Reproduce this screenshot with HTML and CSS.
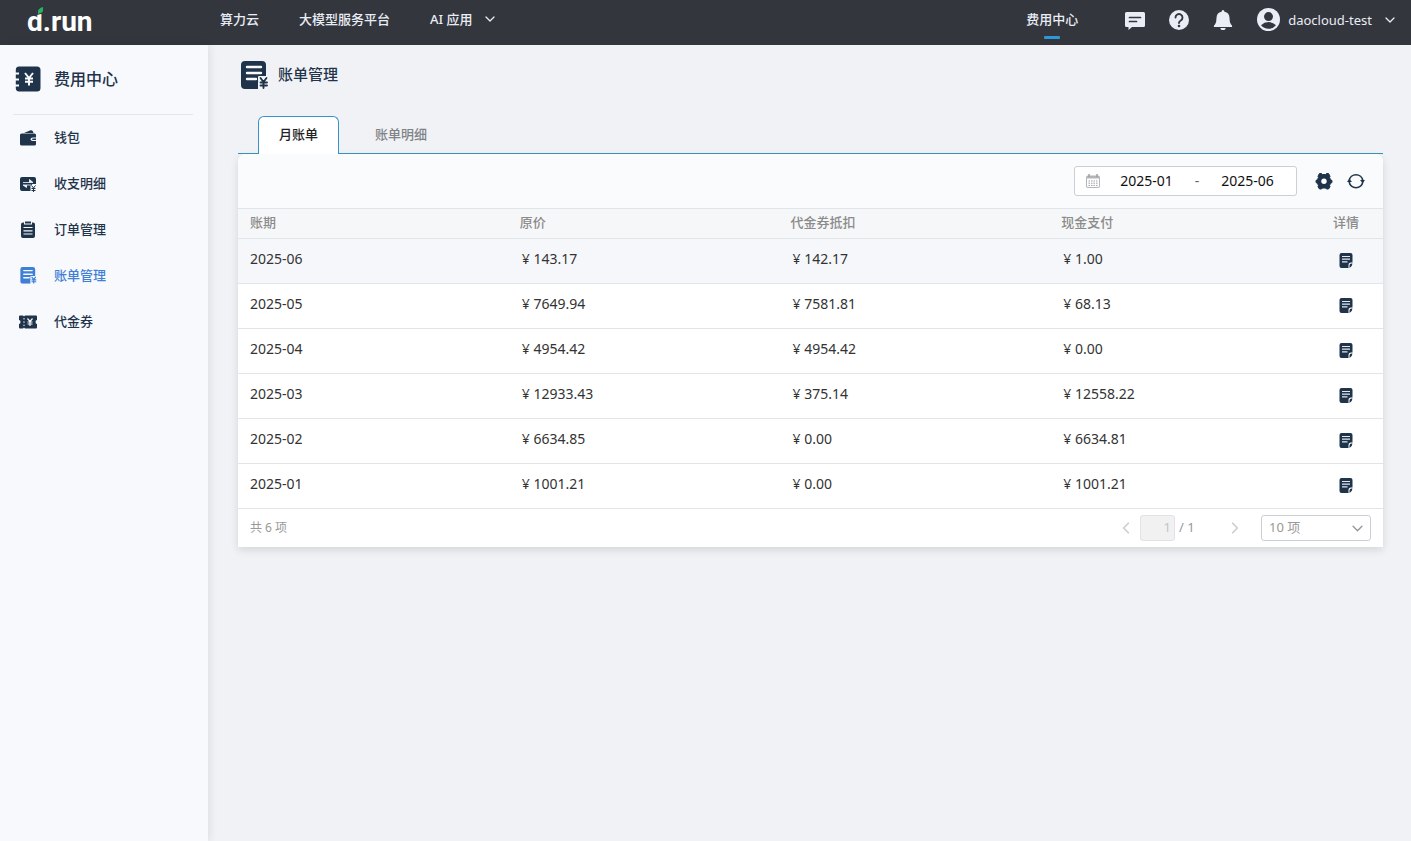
FILE: index.html
```
<!DOCTYPE html>
<html lang="zh-CN">
<head>
<meta charset="utf-8">
<title>账单管理</title>
<link rel="stylesheet" href="styles.css">
</head>
<body>
<svg class="sprite" aria-hidden="true">
  <symbol id="chevron" viewBox="0 0 10 10"><path d="M1 3l4 4 4-4" fill="none" stroke="currentColor" stroke-width="1.3" stroke-linecap="round" stroke-linejoin="round"/></symbol>
  <symbol id="bill" viewBox="0 0 28 28">
    <path d="M4 0h17a4 4 0 0 1 4 4v11h-7q-1 0-1 1v4q0 1 1 1h-1v7H4a4 4 0 0 1-4-4V4a4 4 0 0 1 4-4z" fill="currentColor"/>
    <path d="M6 6h14M6 12h14M6 18h9" fill="none" stroke="#f7f9fc" stroke-width="2.400" stroke-linecap="round"/>
    <path d="M19.500 17l3 4 3-4M22.500 21V27M19.500 21.500h6.500M19.500 24.500h6.500" fill="none" stroke="#f7f9fc" stroke-width="4" stroke-linecap="round"/>
    <path d="M19.500 17l3 4 3-4M22.500 21V27M19.500 21.500h6.500M19.500 24.500h6.500" fill="none" stroke="currentColor" stroke-width="1.900" stroke-linecap="round"/>
  </symbol>
  <symbol id="detail" viewBox="0 0 14 15">
    <path d="M2.500 0h9A2 2 0 0 1 13.500 2v7.500H12q-2.500 0-2.500 2.500v3h-7A2 2 0 0 1 .5 13V2a2 2 0 0 1 2-2z" fill="#1f344a"/>
    <path d="M3 3.500h8M3 6.200h8M3 8.900h5.500" stroke="#e4e9ef" stroke-width="1.200" fill="none"/>
    <path d="M10.500 15v-2.500q0-2 2-2h1q0 2.500-3 4.500z" fill="#1f344a"/>
  </symbol>
</svg>

<header class="topbar">
  <a class="logo" href="#">d.run<svg class="leaf" viewBox="0 0 8 8"><path d="M0 0h8v6L0 8z" fill="#33363c"/><path d="M1 7V4.500Q1 1.500 6 0v3.500Q6 5.500 3.500 6z" fill="#29b35d"/></svg></a>
  <nav class="main-nav">
    <a href="#">算力云</a>
    <a href="#">大模型服务平台</a>
    <a href="#">AI 应用<svg class="arrow"><use href="#chevron"/></svg></a>
  </nav>
  <div class="tools">
    <a class="current" href="#">费用中心</a>
    <button aria-label="消息"><svg viewBox="0 0 20 20"><path d="M1.500 2h17Q20 2 20 3.500v12q0 1.500-1.500 1.500H7l-3.500 3v-3h-2Q0 17 0 15.500v-12Q0 2 1.500 2z" fill="currentColor"/><path d="M4.500 7.500h11M4.500 11.500h7" stroke="#33363c" stroke-width="1.700" stroke-linecap="round"/></svg></button>
    <button aria-label="帮助"><svg viewBox="0 0 20 20"><circle cx="10" cy="10" r="10" fill="currentColor"/><path d="M6.500 7.500a3.500 3.500 0 1 1 5.300 3Q10 11.600 10 13" fill="none" stroke="#33363c" stroke-width="1.900" stroke-linecap="round"/><circle cx="10" cy="16" r="1.300" fill="#33363c"/></svg></button>
    <button aria-label="通知"><svg viewBox="0 0 20 20"><path d="M10 0q1.300 0 1.500 1.700 5 1 5 6.300 0 4.500 1.500 6.500 1.500 1 1 2.500H1q-.5-1.500 1-2.500Q3.500 12.500 3.500 8q0-5.300 5-6.300Q8.700 0 10 0zM7.300 18h5.400q-.5 2.300-2.700 2.300T7.300 18z" fill="currentColor"/></svg></button>
    <button class="user"><svg class="avatar" viewBox="0 0 22 22"><circle cx="11" cy="11" r="11" fill="currentColor"/><circle cx="11" cy="8.200" r="4.300" fill="#33363c"/><path d="M3.800 16.500Q7 13.500 11 13.500t7.200 3Q15.500 19.800 11 19.800T3.800 16.500z" fill="#33363c"/></svg><span>daocloud-test</span><svg class="arrow"><use href="#chevron"/></svg></button>
  </div>
</header>

<div class="layout">
  <aside class="sidebar">
    <h2><svg viewBox="0 0 26 26"><path d="M4 .5h18a3.500 3.500 0 0 1 3.500 3.500v18a3.500 3.500 0 0 1-3.500 3.500H4A3.500 3.500 0 0 1 .8 22v-1.500H4v-2H.8v-4H4v-2H.8v-4H4v-2H.8V4A3.500 3.500 0 0 1 4 .5z" fill="#1f344a"/><path d="M10 7l4 5 4-5M14 12v7.500M10 12.500h8M10 15.800h8" fill="none" stroke="#f7f9fc" stroke-width="2"/></svg>费用中心</h2>
    <nav class="side-nav">
      <a href="#"><svg viewBox="0 0 18 18"><path d="M5 4l6.500-2.700q1.500-.3 2.500 1.200l.5 1.500zM2.500 4.500h13Q17 4.500 17 6v2.500h-3q-2.500 0-2.500 1.800t2.500 1.700h3v3q0 1.500-1.500 1.500h-13Q1 16.500 1 15V6q0-1.500 1.500-1.500z" fill="currentColor"/><path d="M14 9.500h3V11h-3q-1 0-1-.75t1-.75z" fill="currentColor"/></svg>钱包</a>
      <a href="#"><svg viewBox="0 0 18 18"><path d="M3 2h12q2 0 2 2v5h-3.500l-2 2v5H3q-2 0-2-2V4q0-2 2-2z" fill="currentColor"/><path d="M4 7.500h10L10.500 4.500v3M12 10H4l3.500 2.500V10" fill="#f7f9fc" stroke="#f7f9fc" stroke-width=".8"/><path d="M12.500 10.500l2 2.500 2-2.500M14.500 13v4M12.500 13.500h4M12.500 15.500h4" fill="none" stroke="#f7f9fc" stroke-width="2.400"/><path d="M12.500 10.500l2 2.500 2-2.500M14.500 13v4M12.500 13.500h4M12.500 15.500h4" fill="none" stroke="currentColor" stroke-width="1"/></svg>收支明细</a>
      <a href="#"><svg viewBox="0 0 18 18"><path d="M4 1.500h1v2h8v-2h1q2 0 2 2V15q0 2-2 2H4q-2 0-2-2V3.500q0-2 2-2z" fill="currentColor"/><path d="M6 .5h6v2H6z" fill="currentColor"/><path d="M4.500 6.500h9M4.500 9.800h9M4.500 13h9" stroke="#f7f9fc" stroke-width="1.200"/></svg>订单管理</a>
      <a class="active" href="#"><svg viewBox="-2 0 30 30"><use href="#bill" width="28" height="28"/></svg>账单管理</a>
      <a href="#"><svg viewBox="0 0 18 18"><path d="M1 2.500h3l1 1 1-1h11q1 0 1 1V7q-1.500 0-1.500 2T18 11v3.500q0 1-1 1H6l-1-1-1 1H1q-1 0-1-1V11q1.500 0 1.500-2T0 7V3.500q0-1 1-1z" fill="currentColor"/><path d="M5 5v1.500M5 8.300v1.500M5 11.600V13" stroke="#f7f9fc"/><path d="M8.500 5.500l2.500 3 2.500-3M11 8.500v4.500M8.500 9h5M8.500 11h5" fill="none" stroke="#f7f9fc" stroke-width="1.200"/></svg>代金券</a>
    </nav>
  </aside>

  <main class="content">
    <h1><svg viewBox="0 0 28 28"><use href="#bill"/></svg>账单管理</h1>
    <div class="tabs" role="tablist">
      <button role="tab" aria-selected="true" class="selected">月账单</button>
      <button role="tab" aria-selected="false">账单明细</button>
    </div>
    <section class="card">
      <div class="toolbar">
        <div class="range">
          <svg viewBox="0 0 14 14"><path d="M2 1.500h10q2 0 2 2V12q0 2-2 2H2q-2 0-2-2V3.500q0-2 2-2z" fill="#b3b6b9"/><path d="M3 0v3M11 0v3" stroke="#999da1" stroke-width="1.400"/><path d="M1 4.500h12V12q0 1-1 1H2q-1 0-1-1z" fill="#fff"/><path d="M2.500 7h9M2.500 9.200h9M2.500 11.400h9" stroke="#9a9da1" stroke-width="1" stroke-dasharray="1.500 1"/></svg>
          <input aria-label="开始月份" value="2025-01"><span>-</span><input aria-label="结束月份" value="2025-06">
        </div>
        <button class="tool" aria-label="设置"><svg viewBox="0 0 18 18"><path d="M4.500 1.500h2l1 1h3l1-1h2l1.500 2.700-.4 1.500 1 2 1.400.8v2l-1.400.8-1 2 .4 1.500-1.500 2.200h-2l-1-1h-3l-1 1h-2L3 14.800l.4-1.500-1-2L1 10.500v-2l1.400-.8 1-2L3 4.200z" fill="#1f344a" stroke="#1f344a" stroke-linejoin="round"/><circle cx="9" cy="9.300" r="2.700" fill="#fff"/></svg></button>
        <button class="tool" aria-label="刷新"><svg viewBox="0 0 18 18"><path d="M2.200 8.500a6.900 6.900 0 0 1 13.600 0M15.800 10a6.900 6.900 0 0 1-13.600 0" fill="none" stroke="#1f344a" stroke-width="1.600"/><path d="M0 10l2.300-3.200L5 10zM13 8h5l-2.300 3.200z" fill="#1f344a"/></svg></button>
      </div>
      <table>
        <colgroup><col><col><col><col><col class="last"></colgroup>
        <thead><tr><th>账期</th><th>原价</th><th>代金券抵扣</th><th>现金支付</th><th>详情</th></tr></thead>
        <tbody>
          <tr class="hover"><td>2025-06</td><td>¥ 143.17</td><td>¥ 142.17</td><td>¥ 1.00</td><td><button aria-label="详情"><svg><use href="#detail"/></svg></button></td></tr>
          <tr><td>2025-05</td><td>¥ 7649.94</td><td>¥ 7581.81</td><td>¥ 68.13</td><td><button aria-label="详情"><svg><use href="#detail"/></svg></button></td></tr>
          <tr><td>2025-04</td><td>¥ 4954.42</td><td>¥ 4954.42</td><td>¥ 0.00</td><td><button aria-label="详情"><svg><use href="#detail"/></svg></button></td></tr>
          <tr><td>2025-03</td><td>¥ 12933.43</td><td>¥ 375.14</td><td>¥ 12558.22</td><td><button aria-label="详情"><svg><use href="#detail"/></svg></button></td></tr>
          <tr><td>2025-02</td><td>¥ 6634.85</td><td>¥ 0.00</td><td>¥ 6634.81</td><td><button aria-label="详情"><svg><use href="#detail"/></svg></button></td></tr>
          <tr><td>2025-01</td><td>¥ 1001.21</td><td>¥ 0.00</td><td>¥ 1001.21</td><td><button aria-label="详情"><svg><use href="#detail"/></svg></button></td></tr>
        </tbody>
      </table>
      <footer class="pager">
        <span class="total">共 6 项</span>
        <button class="prev" aria-label="上一页" disabled><svg><use href="#chevron"/></svg></button>
        <input class="page" aria-label="页码" value="1" disabled>
        <span class="pages">/ 1</span>
        <button class="next" aria-label="下一页" disabled><svg><use href="#chevron"/></svg></button>
        <div class="size"><select aria-label="每页项数"><option>10 项</option></select><svg><use href="#chevron"/></svg></div>
      </footer>
    </section>
  </main>
</div>
</body>
</html>
```
FILE: styles.css
```
* { box-sizing: border-box; }
body {
  margin: 0;
  min-height: 100vh;
  display: flex;
  flex-direction: column;
  background: #f1f2f6;
  color: #333;
  font: 13px/20px "Noto Sans", "Noto Sans CJK SC", sans-serif;
}
.sprite { display: none; }
a { color: inherit; text-decoration: none; }
button { border: 0; padding: 0; background: none; color: inherit; font: inherit; cursor: pointer; }
input, select { font: inherit; color: inherit; }
svg { display: block; flex: none; }
h1, h2 { margin: 0; color: #1f344a; font-weight: 500; display: flex; align-items: center; }

.topbar {
  display: flex;
  height: 45px;
  padding-bottom: 6px;
  align-items: center;
  background: #33363c;
  color: #e9edf6;
  font-weight: 500;
}
.logo {
  position: relative;
  width: 220px;
  padding: 4px 0 0 27px;
  font: 700 28px/36px Roboto, sans-serif;
  color: #fff;
}
.leaf { position: absolute; left: 37px; top: 7px; width: 8px; height: 8px; }
.main-nav { display: flex; gap: 40px; padding-bottom: 2px; }
.main-nav a { display: flex; align-items: center; gap: 12px; }
.arrow { width: 10px; height: 10px; }
.tools { margin-left: auto; display: flex; align-items: center; gap: 24px; padding-right: 16px; }
.tools button svg { width: 20px; height: 20px; }
.current { position: relative; margin-right: 23px; padding-bottom: 2px; }
.current::after {
  content: "";
  position: absolute;
  left: 18px;
  bottom: -8px;
  width: 16px;
  height: 3px;
  border-radius: 1px;
  background: #2c98d8;
}
.tools .user { display: flex; align-items: center; gap: 8px; font-weight: 400; }
.tools .user .avatar { width: 23px; height: 23px; }
.tools .user .arrow { width: 10px; height: 10px; margin-left: 5px; }

.layout { flex: 1; display: flex; }
.sidebar {
  width: 208px;
  flex: none;
  padding: 15px 15px 0 13px;
  background: #f7f9fd;
  box-shadow: 2px 0 8px rgba(0, 0, 0, .08);
  color: #1f344a;
}
.sidebar h2 {
  height: 55px;
  padding: 0 0 16px 2px;
  gap: 13px;
  border-bottom: 1px solid #e3e6ea;
  font-size: 16px;
}
.sidebar h2 svg { width: 26px; height: 26px; }
.side-nav a { display: flex; height: 46px; align-items: center; gap: 17px; padding: 0 0 2px 6px; font-weight: 500; }
.side-nav svg { width: 18px; height: 18px; margin-top: 2px; }
.side-nav .active { color: #3f7fd6; }

.content { flex: 1; min-width: 0; padding: 14px 28px 28px 30px; }
.content h1 { height: 30px; padding-left: 3px; gap: 9px; font-size: 15px; }
.content h1 svg { width: 28px; height: 28px; margin-top: 2px; }
.tabs {
  position: relative;
  z-index: 1;
  display: flex;
  margin-top: 27px;
  padding-left: 20px;
  border-bottom: 1px solid #3592b8;
}
.tabs button {
  height: 38px;
  margin-bottom: -1px;
  padding: 0 21px 3px;
  border: 1px solid transparent;
  border-bottom: 0;
  border-radius: 6px 6px 0 0;
  color: #7f8387;
  font-weight: 500;
}
.tabs .selected { min-width: 81px; margin-right: 14px; padding: 0 20px 3px; background: #fff; border-color: #3592cb; color: #222; }

.card {
  background: #fff;
  border-radius: 8px 8px 0 0;
  box-shadow: 0 3px 8px rgba(0, 0, 0, .12);
}
.toolbar {
  display: flex;
  height: 54px;
  align-items: center;
  justify-content: flex-end;
  padding-right: 18px;
  border-radius: 8px 8px 0 0;
  background: #fafbfd;
}
.range {
  display: flex;
  width: 223px;
  height: 30px;
  margin-right: 18px;
  padding: 0 2px 0 11px;
  align-items: center;
  border: 1px solid #cbd0d4;
  border-radius: 3px;
  background: #fff;
  color: #111;
  font-size: 14px;
}
.range svg { width: 14px; height: 14px; }
.range input { flex: 1; min-width: 0; padding: 0; border: 0; background: none; text-align: center; }
.range span { width: 8px; text-align: center; color: #666; }
.tool svg { width: 18px; height: 18px; }
.tool + .tool { margin-left: 14px; }

table { width: 100%; border-collapse: collapse; table-layout: fixed; }
.last { width: 62px; }
th, td { text-align: left; padding: 0 12px; }
thead tr { height: 30px; background: #f6f7f9; }
th { padding-bottom: 4px; border-top: 1px solid #e1e4e9; color: #8b8b8b; font-weight: 500; }
th:nth-child(n+2) { padding-left: 11px; }
th:last-child { padding-left: 12px; }
tr { border-bottom: 1px solid #e1e4e9; }
tbody tr { height: 45px; }
tbody .hover { background: #f6f7fa; }
td { padding-bottom: 4px; font-size: 14px; }
td:nth-child(n+2) { padding-left: 13px; }
td:last-child { padding: 4px 0 0 18px; }
td svg { width: 14px; height: 15px; }

.pager { display: flex; height: 38px; align-items: center; padding: 0 12px; color: #999; }
.total { margin-right: auto; font-size: 12px; }
.pager button svg { width: 12px; height: 12px; color: #ccc; }
.prev svg { transform: rotate(90deg); }
.next svg { transform: rotate(-90deg); }
.page {
  width: 35px;
  height: 26px;
  margin: 0 4px 0 8px;
  padding: 0 3px 2px;
  border: 1px solid #e2e3e6;
  border-radius: 3px;
  background: #f1f1f2;
  color: #c4c4c4;
  text-align: right;
}
.pages { width: 50px; padding-bottom: 2px; }
.size { position: relative; width: 110px; margin-left: 20px; }
.size select {
  appearance: none;
  width: 100%;
  height: 26px;
  padding: 0 7px 2px;
  border: 1px solid #cbd0d4;
  border-radius: 3px;
  background: #fff;
}
.size svg { position: absolute; right: 8px; top: 8px; width: 11px; height: 11px; pointer-events: none; }
```
